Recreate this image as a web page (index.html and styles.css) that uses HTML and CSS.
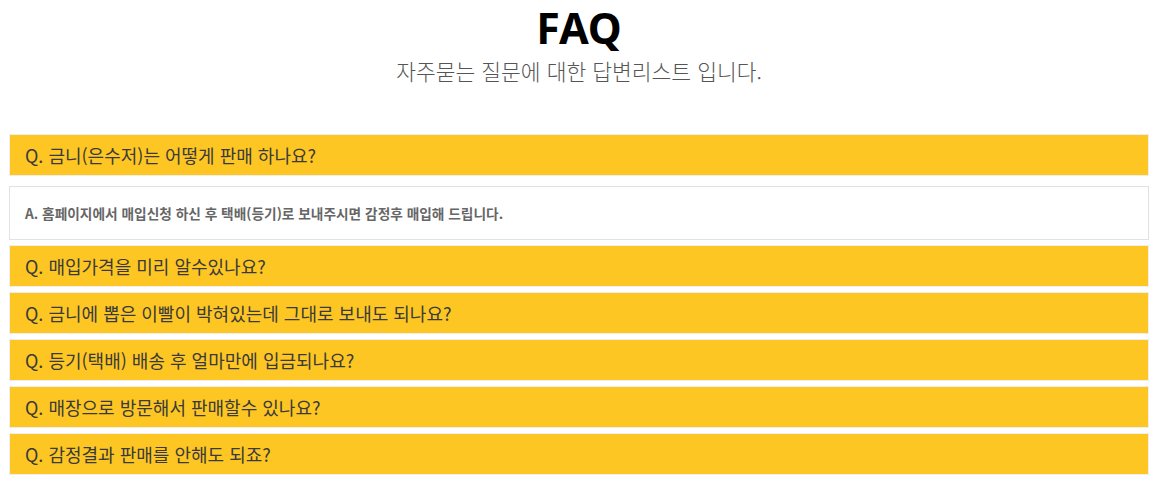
FILE: index.html
```html
<!DOCTYPE html>
<html lang="ko">
<head>
<meta charset="utf-8">
<title>FAQ</title>
<link rel="stylesheet" href="styles.css">
</head>
<body>
<div class="faq">
  <header class="faq-head">
    <h1 class="faq-title">FAQ</h1>
    <p class="faq-sub">자주묻는 질문에 대한 답변리스트 입니다.</p>
  </header>
  <ul class="faq-list">
    <li class="faq-item open">
      <div class="faq-q">Q. 금니(은수저)는 어떻게 판매 하나요?</div>
      <div class="faq-a">A. 홈페이지에서 매입신청 하신 후 택배(등기)로 보내주시면 감정후 매입해 드립니다.</div>
    </li>
    <li class="faq-item"><div class="faq-q">Q. 매입가격을 미리 알수있나요?</div></li>
    <li class="faq-item"><div class="faq-q">Q. 금니에 뽑은 이빨이 박혀있는데 그대로 보내도 되나요?</div></li>
    <li class="faq-item"><div class="faq-q">Q. 등기(택배) 배송 후 얼마만에 입금되나요?</div></li>
    <li class="faq-item"><div class="faq-q">Q. 매장으로 방문해서 판매할수 있나요?</div></li>
    <li class="faq-item"><div class="faq-q">Q. 감정결과 판매를 안해도 되죠?</div></li>
  </ul>
</div>
</body>
</html>
```
FILE: styles.css
```css
html, body {
  margin: 0;
  padding: 0;
  background: #fff;
}
body {
  font-family: "Noto Sans CJK KR", "Noto Sans", sans-serif;
  color: #333;
}
.faq {
  padding-left: 9px;
  width: 1140px;
}
.faq-head {
  text-align: center;
  height: 134px;
  box-sizing: border-box;
}
.faq-title {
  margin: 0;
  font-family: "Noto Sans", "Noto Sans CJK KR", sans-serif;
  font-weight: 700;
  font-size: 43px;
  line-height: 56px;
  color: #000;
}
.faq-sub {
  margin: 0;
  font-size: 21.5px;
  font-weight: 300;
  line-height: 30px;
  color: #555;
}
.faq-list {
  list-style: none;
  margin: 0;
  padding: 0;
  display: flex;
  flex-direction: column;
  gap: 5px;
}
.faq-item {
  display: flex;
  flex-direction: column;
}
.faq-q {
  background: #fdc622;
  border: 1px solid #eee;
  height: 40px;
  line-height: 40px;
  padding-left: 15px;
  font-size: 18px;
  font-weight: 400;
  color: #3a3a3a;
}
.faq-a {
  margin-top: 10px;
  border: 1px solid #e2e2e2;
  height: 52px;
  line-height: 52px;
  padding-left: 15px;
  font-size: 13.7px;
  font-weight: 700;
  color: #666;
}
```
